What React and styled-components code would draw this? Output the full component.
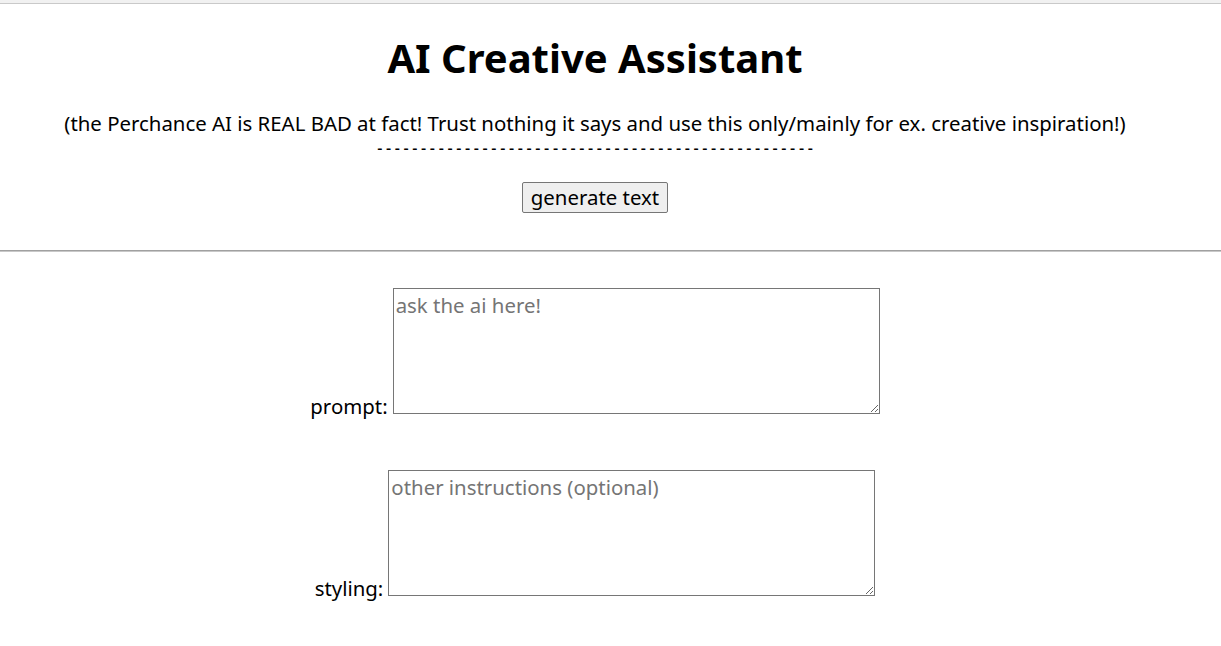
import React from "react";
import styled, { createGlobalStyle } from "styled-components";

const Global = createGlobalStyle`
  html, body { margin: 0; padding: 0; background: #fff; }
  body { font-family: "Noto Sans", "Open Sans", sans-serif; color: #000; }
`;

const Page = styled.div`
  width: 1190px;
`;

const TopStrip = styled.div`
  width: 1221px;
  height: 3px;
  background: #f1f1f1;
  border-bottom: 1px solid #c9c9c9;
`;

const Header = styled.header`
  display: flex;
  flex-direction: column;
  align-items: center;
  padding-top: 28px;
`;

const Title = styled.h1`
  margin: 0;
  font-size: 40px;
  line-height: 52px;
  font-weight: 700;
`;

const Subtitle = styled.p`
  margin: 28px 0 0;
  font-size: 20.4px;
  line-height: 22px;
  white-space: nowrap;
`;

const Dashes = styled.div`
  margin-top: 5px;
  padding-left: 3.65px;
  font-size: 16px;
  line-height: 18px;
  font-weight: 500;
  letter-spacing: 3.65px;
  white-space: nowrap;
`;

const Button = styled.button`
  margin-top: 25px;
  font-family: inherit;
  font-size: 20.4px;
  line-height: 25px;
  padding: 2px 8px;
  background: #efefef;
  border: 1px solid #767676;
  border-radius: 2px;
  color: #000;
`;

const Rule = styled.hr`
  width: 1221px;
  margin: 37px 0 0;
  border: 0;
  border-top: 1px solid #a0a0a0;
  border-bottom: 1px solid #c8c8c8;
  height: 0;
`;

const Form = styled.div`
  display: flex;
  flex-direction: column;
  align-items: center;
  gap: 56px;
  padding: 36px 0 40px;
`;

const Row = styled.label`
  display: flex;
  align-items: flex-end;
  gap: 5px;
  font-size: 20.4px;
`;

const LabelText = styled.span`
  line-height: 24px;
  margin-bottom: -4px;
`;

const Area = styled.textarea`
  width: 481px;
  height: 119px;
  margin: 0;
  padding: 3px 2px 2px;
  font-family: inherit;
  font-size: 20.4px;
  line-height: 26px;
  border: 1px solid #767676;
  border-radius: 0;
  resize: both;
  &::placeholder { color: #757575; }
`;

export default function App() {
  return (
    <>
      <Global />
      <TopStrip />
      <Page>
        <Header>
          <Title>AI Creative Assistant</Title>
          <Subtitle>
            (the Perchance AI is REAL BAD at fact! Trust nothing it says and use this only/mainly for ex. creative inspiration!)
          </Subtitle>
          <Dashes>--------------------------------------------------</Dashes>
          <Button>generate text</Button>
        </Header>
      </Page>
      <Rule />
      <Page>
        <Form>
          <Row>
            <LabelText>prompt:</LabelText>
            <Area placeholder="ask the ai here!" />
          </Row>
          <Row>
            <LabelText>styling:</LabelText>
            <Area placeholder="other instructions (optional)" />
          </Row>
        </Form>
      </Page>
    </>
  );
}
